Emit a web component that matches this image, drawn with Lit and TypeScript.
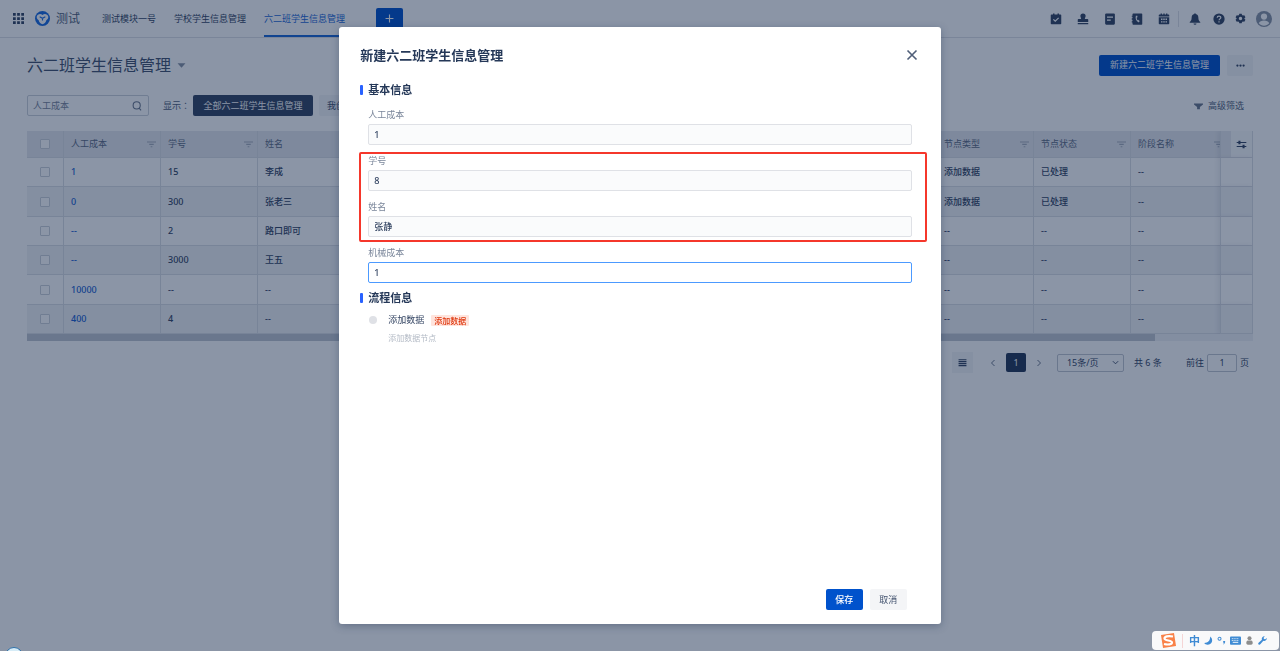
import { LitElement, html, css, svg } from "lit";
import { customElement } from "lit/decorators.js";
import { classMap } from "lit/directives/class-map.js";

type Row = string[];

const HEADERS = [
  "人工成本", "学号", "姓名", "机械成本", "", "", "", "", "",
  "节点类型", "节点状态", "阶段名称", "",
];

const fill = (id: string, no: string, name: string, type: string, state: string): Row => [
  id, no, name, "--", "--", "--", "--", "--", "--", type, state, "--", "--",
];

const ROWS: Row[] = [
  fill("1", "15", "李成", "添加数据", "已处理"),
  fill("0", "300", "张老三", "添加数据", "已处理"),
  fill("--", "2", "路口即可", "--", "--"),
  fill("--", "3000", "王五", "--", "--"),
  fill("10000", "--", "--", "--", "--"),
  fill("400", "4", "--", "--", "--"),
];

const box = (size: number, body: unknown) =>
  html`<svg width=${size} height=${size} viewBox="0 0 16 16" fill="currentColor" aria-hidden="true">${body}</svg>`;

const icons = {
  grid: svg`<path d="M0 0h4v4H0zM6 0h4v4H6zM12 0h4v4h-4zM0 6h4v4H0zM6 6h4v4H6zM12 6h4v4h-4zM0 12h4v4H0zM6 12h4v4H6zM12 12h4v4h-4z"/>`,
  logo: svg`<circle cx="8" cy="8" r="8" fill="#1a6be0"/><path d="M1.800 6C2.500 3.200 6 2.600 8 4.200 10 2.600 13.500 3.200 14.200 6 14.300 8.300 12.800 9.200 12.200 9.600 11.500 12.500 9.800 14 8 14S4.500 12.500 3.800 9.600C3.200 9.200 1.700 8.300 1.800 6Z" fill="#fff"/><path d="M5 6.200 8 7.800 11 6.200M8 7.800v2.200" stroke="#1a6be0" fill="none" stroke-width="1.200"/>`,
  task: svg`<path d="M2 2h2V.5h2V2h4V.5h2V2h2q1 0 1 1v11q0 1-1 1H2q-1 0-1-1V3q0-1 1-1Z"/><path d="m4.500 8.500 2.500 2.500 4.500-4.500" stroke="#fff" stroke-width="1.600" fill="none"/>`,
  stamp: svg`<path d="M8 .5a3.500 3.500 0 0 1 3.500 3.500c0 1.500-1 2.200-1 4H14q1 0 1 1v3H1V9q0-1 1-1h3.500c0-1.800-1-2.500-1-4A3.500 3.500 0 0 1 8 .5ZM1 13.200h14V15H1z"/>`,
  note: svg`<path d="M3 .5h10q1.500 0 1.500 1.500v12q0 1.500-1.500 1.500H3q-1.500 0-1.500-1.500V2Q1.500.500 3 .500Z"/><path d="M4 5.500h8M4 9.500h5" stroke="#fff" stroke-width="1.500"/>`,
  phone: svg`<path d="M3 .5h11q1 0 1 1v13q0 1-1 1H3q-1 0-1-1v-2H1v-1.500h1v-2H1V7h1V5H1V3.500h1v-2q0-1 1-1Z"/><path d="M6.500 3.500c-1 3.500 0 7 4 9l1-2-2-1.500-.8.600c-.8-1-1.200-2.400-1-3.600l1-.3-.3-2.200Z" fill="#fff"/>`,
  calendar: svg`<path d="M1 5.500h14V14q0 1-1 1H2q-1 0-1-1ZM2 2h12q1 0 1 1v1.700H1V3q0-1 1-1ZM3.500.500h1.800V2H3.500zM7.100.500h1.800V2H7.100zM10.700.500h1.800V2h-1.800z"/><path d="M4 8.300h8M4 11.800h8" stroke="#fff" stroke-width="1.800" stroke-dasharray="2 1"/>`,
  bell: svg`<path d="M7 1.200a1 1 0 0 1 2 0C11.500 1.800 12.500 3.800 12.500 6.200c0 3 .8 4.200 2.500 5.800v1H1v-1c1.700-1.600 2.500-2.800 2.500-5.800C3.500 3.800 4.500 1.800 7 1.200ZM6 14h4a2 1.800 0 0 1-4 0Z"/>`,
  help: svg`<circle cx="8" cy="8" r="7.500"/><path d="M5.600 6.400C5.600 3.200 10.500 3.400 10.400 6.200 10.300 7.900 8 7.800 8 9.800M8 11v1.600" stroke="#fff" stroke-width="1.600" fill="none"/>`,
  gear: svg`<path fill-rule="evenodd" d="M6.300 1h3.400l.5 2 1.300.7 2-.6 1.700 3-1.500 1.400v1l1.500 1.400-1.700 3-2-.6-1.300.7-.5 2H6.300l-.5-2-1.300-.7-2 .6-1.700-3L2.300 8.500v-1L.8 6.100l1.700-3 2 .6L5.800 3ZM8 5.500a2.500 2.500 0 1 0 0 5 2.500 2.500 0 0 0 0-5Z"/>`,
  user: svg`<circle cx="8" cy="8" r="8"/><circle cx="8" cy="5.600" r="3.100" fill="#fff"/><path d="M2.800 12.300C3.500 10.200 5.500 9.400 8 9.400s4.500.8 5.200 2.900C12 14 10 14.700 8 14.700S4 14 2.800 12.300Z" fill="#fff"/>`,
  search: svg`<circle cx="7.500" cy="7" r="5.700" fill="none" stroke="currentColor" stroke-width="1.700"/><path d="m11.500 11.500 3 3.500" stroke="currentColor" stroke-width="1.700"/>`,
  caret: svg`<path d="M1 4h14l-7 8z"/>`,
  filter: svg`<path d="M0 2.500h16v2H0zM4 6.800h8v2H4zM6.500 11h3v2h-3z"/>`,
  funnel: svg`<path d="M0 2.500h16v2L10.500 9v4h-5V9L0 4.500Z"/>`,
  sliders: svg`<path d="M1 5h14M1 11h14" stroke="currentColor" stroke-width="1.500"/><path d="M3.500 2.500h3v5h-3zM9.500 8.500h3v5h-3z"/>`,
  lines: svg`<path d="M1 2h14v2.200H1zM1 5.500h14v2.200H1zM1 9h14v2.200H1zM1 12.500h14v2H1z"/>`,
  left: svg`<path d="M11 2 5 8l6 6" stroke="currentColor" stroke-width="2" fill="none"/>`,
  right: svg`<path d="m5 2 6 6-6 6" stroke="currentColor" stroke-width="2" fill="none"/>`,
  down: svg`<path d="m2 5 6 6 6-6" stroke="currentColor" stroke-width="2" fill="none"/>`,
  close: svg`<path d="m2 2 12 12M14 2 2 14" stroke="currentColor" stroke-width="2.200" fill="none"/>`,
  plus: svg`<path d="M8 1v14M1 8h14" stroke="currentColor" stroke-width="2" fill="none"/>`,
  more: svg`<circle cx="2.500" cy="8" r="2"/><circle cx="8" cy="8" r="2"/><circle cx="13.500" cy="8" r="2"/>`,
  moon: svg`<path d="M11 1c6 5 4 14-4 14.500-3 .2-5.500-1-6.500-3C7 12.500 11 8.500 11 1Z"/>`,
  punct: svg`<circle cx="4.500" cy="5" r="2.700" fill="none" stroke="currentColor" stroke-width="1.800"/><path d="M11 9h3.500c0 3-.5 5-3 6l-.5-1q1.500-1 1.200-2.200H11Z"/>`,
  person: svg`<circle cx="8" cy="4" r="3.600"/><path d="M5 8h6q2.500 0 2.500 3v2q0 2.500-2.500 2.500H5q-2.500 0-2.500-2.500v-2Q2.500 8 5 8Z"/>`,
  wrench: svg`<path d="M15.500 3.500a4.500 4.500 0 0 1-6 5L4 14.800a2 2 0 0 1-3-2.800L7 6.500a4.500 4.500 0 0 1 5-6L10 3.200l.5 2.300 2.500.3Z"/>`,
};

@customElement("app-root")
export class AppRoot extends LitElement {
  static styles = css`
    :host {
      display: block;
      position: relative;
      min-height: 100vh;
      overflow: hidden;
      background: #fff;
      color: #344563;
      font: 9px/14px "Noto Sans", "Noto Sans CJK SC", sans-serif;
    }
    * { box-sizing: border-box; }
    svg { display: block; flex: none; }
    button, input, select { font: inherit; color: inherit; margin: 0; outline: none; }
    button { border: 0; background: none; padding: 0; cursor: pointer; display: flex; align-items: center; justify-content: center; white-space: nowrap; }
    a { color: inherit; text-decoration: none; }

    .topbar { display: flex; align-items: center; height: 38px; padding: 0 8px 0 13px; border-bottom: 1px solid #dfe1e6; }
    .logo { display: flex; margin: 0 6px 0 11px; }
    .brand { font-size: 12px; color: #505f79; }
    .tabs { display: flex; align-self: stretch; gap: 18px; margin-left: 22px; }
    .tab { display: flex; align-items: center; border-bottom: 2px solid transparent; padding-top: 2px; white-space: nowrap; }
    .tab.on { color: #1a66d6; border-color: #1a66d6; }
    .add { width: 27px; height: 21px; margin-left: 31px; background: #0052cc; color: #fff; border-radius: 2px; }
    .tools { display: flex; align-items: center; margin-left: auto; }
    .group { display: flex; gap: 15px; }
    .group.account { gap: 12px; align-items: center; margin-left: 8px; padding-left: 10px; border-left: 1px solid #dfe1e6; }
    .group .avatar { color: #8993a4; }
    .group .wide { margin-left: -2px; }

    .page { padding: 15px 27px 0; }
    .head, .bar { display: flex; align-items: center; justify-content: space-between; }
    .title { display: flex; align-items: center; gap: 6px; margin: 0; font-size: 16px; line-height: 24px; font-weight: 400; color: #42526e; }
    .caret { color: #8993a4; }
    .acts { display: flex; gap: 7px; }
    .btn { height: 21px; padding: 0 11px; border-radius: 2px; background: #f4f5f7; color: #42526e; }
    .btn.main { background: #0052cc; color: #fff; }
    .acts .main { width: 121px; }
    .acts .more { width: 26px; padding: 0; background: #f4f5f7; color: #344563; }
    .bar { margin-top: 18px; height: 21px; }
    .views { display: flex; align-items: center; }
    .search { display: flex; align-items: center; width: 122px; height: 21px; padding: 0 6px 0 5px; border: 1px solid #ccd1da; border-radius: 2px; color: #6b778c; }
    .search input { flex: 1; min-width: 0; padding: 0; border: 0; background: none; }
    .search input::placeholder { color: #7a869a; opacity: 1; }
    .show { margin: 0 4px 0 14px; width: 26px; white-space: nowrap; color: #505f79; font-family: "Noto Sans CJK TC", sans-serif; }
    .views .btn { margin-right: 6px; background: #f4f5f7; padding: 0 8px; }
    .views .btn.dark { width: 120px; background: #344563; color: #fff; }
    .advanced { gap: 5px; padding: 1px 9px 0 0; color: #505f79; }
    .advanced svg { color: #6b778c; }

    .grid { margin-top: 15px; overflow: hidden; }
    table { width: 1331px; table-layout: fixed; border-collapse: separate; border-spacing: 0; }
    th, td { padding: 0 7px; text-align: left; white-space: nowrap; font-weight: 400; border-right: 1px solid #dcdfe5; border-bottom: 1px solid #dcdfe5; }
    .c-check { width: 37px; }
    .c-end { width: 33px; }
    th { height: 27px; background: #e7e9ee; color: #5e6c84; }
    td { height: 29px; background: #fff; font-weight: 500; }
    tr:nth-child(3n + 2) td { height: 30px; }
    tr:nth-child(even) td { background: #f1f3f6; }
    .check { padding: 0 0 0 13px; }
    .check input { display: block; appearance: none; width: 10px; height: 10px; border: 1px solid #ccd1da; border-radius: 1px; background: #fff; }
    .th { display: flex; align-items: center; justify-content: space-between; }
    .th svg { color: #a5adba; margin-right: -3px; }
    .link { color: #1a5fd0; font-weight: 500; }
    .end { position: sticky; right: 0; border-left: 1px solid #dcdfe5; box-shadow: -2px 0 5px rgba(9, 30, 66, 0.08); }
    th.end { padding: 0 0 0 10px; }
    .cog { width: 100%; height: 26px; background: #fafbfc; color: #344563; }
    .scroll { height: 7px; background: #f0f2f5; }
    .thumb { width: 92%; height: 7px; background: #c1c7d0; }

    .pager { display: flex; align-items: center; justify-content: flex-end; margin-top: 11px; padding-right: 4px; height: 21px; }
    .list { width: 21px; height: 21px; background: #f4f5f7; }
    .arrow { width: 8px; margin: 0 9px; color: #6b778c; }
    .list + .arrow { margin-left: 16px; }
    .num { width: 20px; height: 19px; background: #253858; color: #fff; border-radius: 2px; }
    .size { position: relative; display: flex; align-items: center; margin-left: 5px; }
    .size select { appearance: none; width: 67px; height: 18px; padding: 0 0 0 9px; background: none; border: 1px solid #c1c7d0; border-radius: 2px; }
    .size svg { position: absolute; right: 5px; }
    .total { width: 29px; margin: 0 23px 0 10px; white-space: nowrap; }
    .goto { display: flex; align-items: center; gap: 3px; }
    .goto input { width: 30px; height: 18px; padding: 0; text-align: center; background: none; border: 1px solid #c1c7d0; border-radius: 2px; }

    .bubble { position: absolute; z-index: 1; left: 5px; bottom: -14px; width: 18px; height: 18px; border: 1px solid #2d6fa8; border-radius: 50%; background: #d6ecf7; }
    .mask { position: absolute; inset: 0; display: flex; justify-content: center; padding: 27px 0; background: rgba(9, 30, 66, 0.47); }
    .modal { display: flex; flex-direction: column; width: 47%; min-width: 480px; padding: 17px 29px 14px 21px; background: #fff; border-radius: 3px; box-shadow: 0 2px 8px rgba(9, 30, 66, 0.3); }
    .mhead { display: flex; align-items: center; justify-content: space-between; }
    .mhead h2 { margin: 0; font-size: 13px; line-height: 22px; font-weight: 700; color: #253858; }
    .mhead button { width: 12px; height: 12px; margin-right: -6px; color: #505f79; }
    .sec { display: flex; align-items: center; gap: 5px; margin: 0; font-size: 11px; line-height: 16px; font-weight: 700; color: #253858; }
    .sec::before { content: ""; width: 3px; height: 10px; background: #2962ff; border-radius: 1px; }
    .mhead + .sec { margin-top: 16px; }
    .fields { display: flex; flex-direction: column; gap: 10px; margin: 11px 0 7px 8px; }
    .pair { position: relative; display: flex; flex-direction: column; gap: 10px; }
    .pair::after { content: ""; position: absolute; inset: -3px -15px -5px -9px; border: 2px solid #f5372b; border-radius: 2px; pointer-events: none; }
    .field { display: flex; flex-direction: column; gap: 4px; line-height: 11px; color: #7a869a; }
    .field input { width: 100%; height: 21px; padding: 0 5px; border: 1px solid #dfe1e6; border-radius: 2px; background: #fafbfc; color: #344563; font-weight: 500; }
    .field input.active { border-color: #4c9aff; background: #fff; }
    .step { display: grid; grid-template-columns: 8px 1fr; column-gap: 11px; row-gap: 5px; align-items: center; margin: 7px 0 0 9px; }
    .dot { width: 8px; height: 8px; border-radius: 50%; background: #dfe1e6; }
    .name { display: flex; align-items: center; gap: 7px; }
    .tag { padding: 0 3px; font-size: 8px; line-height: 11px; font-weight: 500; color: #de350b; background: #ffe4dd; border-radius: 1px; }
    .desc { grid-column: 2; justify-self: start; font-size: 8px; line-height: 11px; color: #b3bac5; }
    .foot { display: flex; justify-content: flex-end; gap: 7px; margin-top: auto; padding-right: 5px; }
    .foot .btn { width: 37px; padding: 0; }
    .foot .main { font-weight: 500; }

    .ime { position: absolute; right: 1px; bottom: 1px; display: flex; align-items: center; gap: 4px; width: 127px; height: 19px; padding-left: 7px; background: #f9f9fa; border-radius: 4px; color: #3f8bd4; }
    .ime .zh { padding-left: 6px; border-left: 1px solid #f5d5d5; font-size: 11px; font-weight: 700; }
    .ime .grey { color: #8d8d8d; }
  `;

  private field(id: string, label: string, value: string, active = false) {
    return html`<div class="field">
      <label for=${id}>${label}</label>
      <input id=${id} class=${classMap({ active })} .value=${value} />
    </div>`;
  }

  render() {
    return html`
      <header class="topbar">
        <button aria-label="menu">${box(11, icons.grid)}</button>
        <a class="logo" href="#" aria-label="home">${box(15, icons.logo)}</a>
        <span class="brand">测试</span>
        <nav class="tabs">
          <a class="tab" href="#">测试模块一号</a>
          <a class="tab" href="#">学校学生信息管理</a>
          <a class="tab on" href="#">六二班学生信息管理</a>
        </nav>
        <button class="add" aria-label="add">${box(9, icons.plus)}</button>
        <div class="tools">
          <div class="group">
            ${[icons.task, icons.stamp, icons.note, icons.phone, icons.calendar].map(
              (i) => html`<button>${box(12, i)}</button>`
            )}
          </div>
          <div class="group account">
            <button>${box(12, icons.bell)}</button>
            <button>${box(12, icons.help)}</button>
            <button class="wide">${box(11, icons.gear)}</button>
            <button class="wide avatar">${box(16, icons.user)}</button>
          </div>
        </div>
      </header>

      <main class="page">
        <div class="head">
          <h1 class="title">六二班学生信息管理 <span class="caret">${box(9, icons.caret)}</span></h1>
          <div class="acts">
            <button class="btn main">新建六二班学生信息管理</button>
            <button class="btn more" aria-label="more">${box(9, icons.more)}</button>
          </div>
        </div>
        <div class="bar">
          <div class="views">
            <label class="search"><input placeholder="人工成本" />${box(10, icons.search)}</label>
            <span class="show">显示：</span>
            <button class="btn dark">全部六二班学生信息管理</button>
            <button class="btn">我创建的</button>
          </div>
          <button class="advanced">${box(9, icons.funnel)} 高级筛选</button>
        </div>

        <div class="grid">
          <table>
            <colgroup>
              <col class="c-check" />
              ${HEADERS.map(() => html`<col />`)}
              <col class="c-end" />
            </colgroup>
            <thead>
              <tr>
                <th class="check"><input type="checkbox" aria-label="all" /></th>
                ${HEADERS.map((h) => html`<th><div class="th">${h}${box(9, icons.filter)}</div></th>`)}
                <th class="end"><button class="cog" aria-label="columns">${box(11, icons.sliders)}</button></th>
              </tr>
            </thead>
            <tbody>
              ${ROWS.map(
                (r) => html`<tr>
                  <td class="check"><input type="checkbox" aria-label="row" /></td>
                  ${r.map((c, i) => html`<td>${i === 0 ? html`<a class="link" href="#">${c}</a>` : c}</td>`)}
                  <td class="end"></td>
                </tr>`
              )}
            </tbody>
          </table>
        </div>
        <div class="scroll"><div class="thumb"></div></div>

        <div class="pager">
          <button class="list" aria-label="density">${box(9, icons.lines)}</button>
          <button class="arrow" aria-label="previous">${box(8, icons.left)}</button>
          <button class="num">1</button>
          <button class="arrow" aria-label="next">${box(8, icons.right)}</button>
          <label class="size"><select aria-label="page size"><option>15条/页</option></select>${box(7, icons.down)}</label>
          <span class="total">共 6 条</span>
          <label class="goto">前往 <input .value=${"1"} /> 页</label>
        </div>
      </main>

      <div class="mask">
        <section class="modal" role="dialog" aria-labelledby="dlg">
          <div class="mhead">
            <h2 id="dlg">新建六二班学生信息管理</h2>
            <button aria-label="close">${box(12, icons.close)}</button>
          </div>
          <h3 class="sec">基本信息</h3>
          <div class="fields">
            ${this.field("labor", "人工成本", "1")}
            <div class="pair">
              ${this.field("no", "学号", "8")}
              ${this.field("name", "姓名", "张静")}
            </div>
            ${this.field("machine", "机械成本", "1", true)}
          </div>
          <h3 class="sec">流程信息</h3>
          <div class="step">
            <span class="dot"></span>
            <div class="name"><span>添加数据</span><span class="tag">添加数据</span></div>
            <div class="desc">添加数据节点</div>
          </div>
          <div class="foot">
            <button class="btn main">保存</button>
            <button class="btn">取消</button>
          </div>
        </section>
      </div>

      <span class="bubble"></span>

      <div class="ime">
        <svg width="19" height="18" viewBox="0 0 19 18" aria-hidden="true">
          <path d="M2 3 15 1l2 13-13 2Z" fill="#f98148" />
          <path d="M14 4.500C9 3.500 5.500 4.500 5.500 6.500c0 2.500 7.500 1.500 7.500 4 0 2-4 2.500-8 1.500" fill="none" stroke="#fff" stroke-width="2.200" />
        </svg>
        <span class="zh">中</span>
        ${box(9, icons.moon)} ${box(9, icons.punct)}
        <svg width="11" height="9" viewBox="0 0 12 9" aria-hidden="true">
          <path d="M1 0h10q1 0 1 1v7q0 1-1 1H1Q0 9 0 8V1q0-1 1-1Z" fill="currentColor" />
          <path d="M2 2.500h8M2 4.500h8" stroke="#fff" stroke-dasharray="1 1" /><path d="M3 6.500h6" stroke="#fff" />
        </svg>
        <span class="grey">${box(9, icons.person)}</span>
        ${box(9, icons.wrench)}
      </div>
    `;
  }
}
